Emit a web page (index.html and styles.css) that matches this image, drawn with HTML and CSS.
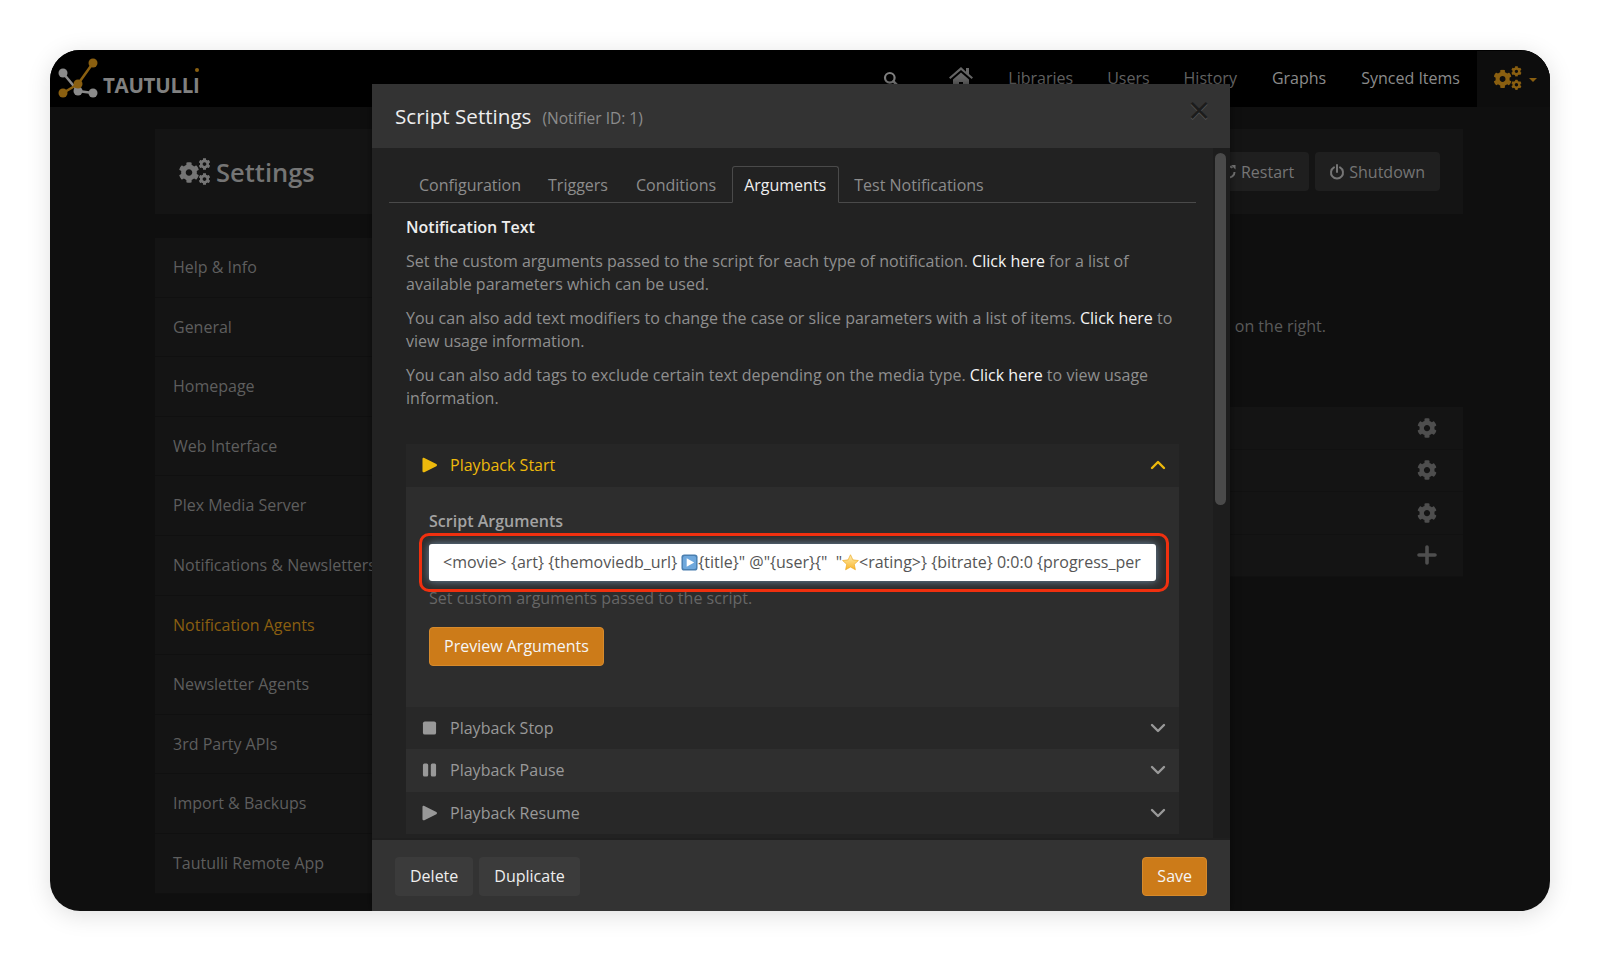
FILE: index.html
```html
<!DOCTYPE html>
<html lang="en">
<head>
	<meta charset="UTF-8">
	<title>Tautulli - Settings</title>
	<link rel="stylesheet" href="styles.css">
</head>
<body>
	<svg class="defs" width="0" height="0">
		<linearGradient id="star-fill" x1="0" y1="0" x2="0" y2="1">
			<stop offset="0" stop-color="#ffeeb0"/>
			<stop offset="1" stop-color="#f9b52b"/>
		</linearGradient>
		<symbol id="cog" viewBox="0 0 512 512">
			<path d="M487.4 315.7l-42.6-24.6c4.3-23.2 4.3-47 0-70.2l42.6-24.6c4.9-2.8 7.1-8.6 5.5-14-11.1-35.6-30-67.8-54.7-94.6-3.8-4.1-10-5.1-14.8-2.3L380.8 110c-17.9-15.4-38.5-27.3-60.8-35.1V25.8c0-5.6-3.9-10.5-9.4-11.7-36.7-8.2-74.3-7.8-109.2 0-5.5 1.2-9.4 6.1-9.4 11.7V75c-22.2 7.9-42.8 19.8-60.8 35.1L88.7 85.5c-4.9-2.8-11-1.9-14.8 2.3-24.7 26.7-43.6 58.9-54.7 94.6-1.7 5.4.6 11.2 5.5 14L67.3 221c-4.3 23.2-4.3 47 0 70.2l-42.6 24.6c-4.9 2.8-7.1 8.6-5.5 14 11.1 35.6 30 67.8 54.7 94.6 3.8 4.1 10 5.1 14.8 2.3l42.6-24.6c17.9 15.4 38.5 27.3 60.8 35.1v49.2c0 5.6 3.9 10.5 9.4 11.7 36.7 8.2 74.3 7.8 109.2 0 5.5-1.2 9.4-6.1 9.4-11.7v-49.2c22.2-7.9 42.8-19.8 60.8-35.1l42.6 24.6c4.9 2.8 11 1.9 14.8-2.3 24.7-26.7 43.6-58.9 54.7-94.6 1.5-5.5-.7-11.3-5.6-14.1zM256 336c-44.1 0-80-35.9-80-80s35.9-80 80-80 80 35.9 80 80-35.9 80-80 80z"/>
		</symbol>
		<symbol id="cogs" viewBox="0 0 32 28">
			<use href="#cog" x="0" y="4" width="21" height="21"/>
			<use href="#cog" x="20" y="0" width="12" height="12"/>
			<use href="#cog" x="20" y="15" width="12" height="12"/>
		</symbol>
		<symbol id="chev-down" viewBox="0 0 16 10">
			<path d="M2 2l6 6 6-6" fill="none" stroke="currentColor" stroke-width="2.4" stroke-linecap="round" stroke-linejoin="round"/>
		</symbol>
		<symbol id="play" viewBox="0 0 16 16">
			<path d="M.5 1.6C.5.4 1.5-.2 2.5.4l12.8 6.4c.9.5.9 1.9 0 2.4L2.5 15.6c-1 .6-2 0-2-1.2z"/>
		</symbol>
	</svg>

	<div class="window">
		<nav class="navbar">
			<a class="brand">
				<svg class="brand-mark" viewBox="0 0 44 44">
					<path d="M6 16L21 34L36 36" fill="none" stroke="#8a8a8a" stroke-width="2.5"/>
					<circle cx="6" cy="16" r="4.5" fill="#8a8a8a"/>
					<circle cx="21" cy="34" r="4.5" fill="#8a8a8a"/>
					<circle cx="36" cy="36" r="4.5" fill="#8a8a8a"/>
					<path d="M6 36L21 27L36 6" fill="none" stroke="#8a5f10" stroke-width="2.5"/>
					<circle cx="36" cy="6" r="4.5" fill="#8a5f10"/>
					<circle cx="21" cy="27" r="4.5" fill="#8a5f10"/>
					<circle cx="6" cy="36" r="4.5" fill="#8a5f10"/>
				</svg>
				<span class="brand-name">TAUTULL<span class="brand-i">I</span></span>
			</a>
			<div class="nav-links">
				<svg class="nav-search" viewBox="0 0 16 16"><circle cx="6.8" cy="6.8" r="4.8" fill="none" stroke="currentColor" stroke-width="2.2"/><path d="M10.4 10.4l4 4" stroke="currentColor" stroke-width="2.6" stroke-linecap="round"/></svg>
				<svg class="nav-home" viewBox="0 0 24 20"><path d="M12 0L0 10.5l1.4 1.6L12 2.9l10.6 9.2 1.4-1.6-4-3.5V1h-3v3.8z" fill="currentColor"/><path d="M4 12.5L12 5.6l8 6.9V20h-6v-5h-4v5H4z" fill="currentColor"/></svg>
				<a>Libraries</a>
				<a>Users</a>
				<a>History</a>
				<a>Graphs</a>
				<a>Synced Items</a>
				<div class="nav-settings">
					<svg class="nav-cogs"><use href="#cogs"/></svg>
					<span class="caret"></span>
				</div>
			</div>
		</nav>

		<main class="page">
			<header class="page-head">
				<h1><svg class="head-cogs"><use href="#cogs"/></svg>Settings</h1>
				<div class="head-btns">
					<a class="btn-dark"><svg class="btn-ico" viewBox="0 0 16 16"><path d="M13.5 8a5.5 5.5 0 1 1-2-4.2" fill="none" stroke="currentColor" stroke-width="2"/><path d="M10 1h4.5v4.5z" fill="currentColor"/></svg>Restart</a>
					<a class="btn-dark"><svg class="btn-ico" viewBox="0 0 16 16"><path d="M5 3.4a6 6 0 1 0 6 0" fill="none" stroke="currentColor" stroke-width="2" stroke-linecap="round"/><path d="M8 1v7" stroke="currentColor" stroke-width="2" stroke-linecap="round"/></svg>Shutdown</a>
				</div>
			</header>
			<div class="page-body">
				<ul class="side">
					<li>Help &amp; Info</li>
					<li>General</li>
					<li>Homepage</li>
					<li>Web Interface</li>
					<li>Plex Media Server</li>
					<li>Notifications &amp; Newsletters</li>
					<li class="on">Notification Agents</li>
					<li>Newsletter Agents</li>
					<li>3rd Party APIs</li>
					<li>Import &amp; Backups</li>
					<li>Tautulli Remote App</li>
				</ul>
				<section class="agents">
					<p class="agents-note">Add a new notification agent, or configure an existing notification agent by clicking the settings icon on the right.</p>
					<ul class="agent-list">
						<li><svg class="agent-ico"><use href="#cog"/></svg></li>
						<li><svg class="agent-ico"><use href="#cog"/></svg></li>
						<li><svg class="agent-ico"><use href="#cog"/></svg></li>
						<li><svg class="agent-ico" viewBox="0 0 20 20"><path d="M10 2v16M2 10h16" stroke="currentColor" stroke-width="3.6" stroke-linecap="round"/></svg></li>
					</ul>
				</section>
			</div>
		</main>

		<div class="modal">
			<div class="modal-head">
				<h2>Script Settings</h2>
				<small>(Notifier ID: 1)</small>
				<span class="modal-x">&times;</span>
			</div>
			<div class="modal-body">
				<ul class="tabs">
					<li>Configuration</li>
					<li>Triggers</li>
					<li>Conditions</li>
					<li class="on">Arguments</li>
					<li>Test Notifications</li>
				</ul>
				<div class="pane">
					<h3>Notification Text</h3>
					<p>Set the custom arguments passed to the script for each type of notification. <a>Click here</a> for a list of available parameters which can be used.</p>
					<p>You can also add text modifiers to change the case or slice parameters with a list of items. <a>Click here</a> to view usage information.</p>
					<p>You can also add tags to exclude certain text depending on the media type. <a>Click here</a> to view usage information.</p>

					<div class="acc">
						<div class="acc-row open">
							<svg class="acc-ico"><use href="#play"/></svg>
							<span>Playback Start</span>
							<svg class="acc-chev up"><use href="#chev-down"/></svg>
						</div>
						<div class="acc-body">
							<label>Script Arguments</label>
							<div class="field">
								<div class="input">&lt;movie&gt; {art} {themoviedb_url} <svg class="emoji" viewBox="0 0 18 18"><rect x="0.5" y="0.5" width="17" height="17" rx="3" fill="#4a7fb0"/><rect x="2" y="2" width="14" height="14" rx="2" fill="#6fa8dc"/><path d="M6 4.5l8 4.5-8 4.5z" fill="#fff"/></svg>{title}" @"{user}{"&nbsp; "<svg class="emoji" viewBox="0 0 18 18"><path d="M9 .8l2.5 5.4 5.9.7-4.4 4 1.2 5.8L9 13.8l-5.2 2.9L5 10.9.6 6.9l5.9-.7z" fill="url(#star-fill)" stroke="#eda820" stroke-width=".7" stroke-linejoin="round"/></svg>&lt;rating&gt;} {bitrate} 0:0:0 {progress_per</div>
							</div>
							<p class="help">Set custom arguments passed to the script.</p>
							<a class="btn-orange">Preview Arguments</a>
						</div>
						<div class="acc-row">
							<svg class="acc-ico" viewBox="0 0 16 16"><rect x="1" y="1" width="14" height="14" rx="2"/></svg>
							<span>Playback Stop</span>
							<svg class="acc-chev"><use href="#chev-down"/></svg>
						</div>
						<div class="acc-row alt">
							<svg class="acc-ico" viewBox="0 0 16 16"><rect x="1" y="1" width="5.6" height="14" rx="1.6"/><rect x="9.4" y="1" width="5.6" height="14" rx="1.6"/></svg>
							<span>Playback Pause</span>
							<svg class="acc-chev"><use href="#chev-down"/></svg>
						</div>
						<div class="acc-row">
							<svg class="acc-ico"><use href="#play"/></svg>
							<span>Playback Resume</span>
							<svg class="acc-chev"><use href="#chev-down"/></svg>
						</div>
					</div>
				</div>
				<div class="scroll"><div class="thumb"></div></div>
			</div>
			<div class="modal-foot">
				<a class="btn-grey">Delete</a>
				<a class="btn-grey">Duplicate</a>
				<a class="btn-orange save">Save</a>
			</div>
		</div>
	</div>
</body>
</html>
```

FILE: styles.css
```css
*{margin: 0;padding: 0;box-sizing: border-box;}
body{background: #fff;font-family: "Open Sans", "Liberation Sans", sans-serif;font-size: 16px;}
li{list-style: none;}
.defs{position: absolute;}

.window{
	position: relative;
	width: 1500px;
	height: 861px;
	margin: 50px;
	border-radius: 30px;
	background: #0f0f0f;
	overflow: hidden;
}
body::before{
	content: "";
	position: absolute;
	top: 50px;left: 50px;
	width: 1500px;height: 861px;
	border-radius: 30px;
	box-shadow: 0 4px 24px rgba(0,0,0,.13);
}

/* top bar */
.navbar{display: flex;justify-content: space-between;height: 57px;background: #000;position: relative;}
.brand{display: flex;align-items: center;padding-left: 7px;}
.brand-mark{width: 44px;height: 44px;margin-top: 1px;}
.brand-name{font-size: 20.5px;font-weight: 700;color: #808080;margin: 14px 0 0 2px;letter-spacing: -.3px;line-height: 1;}
.brand-i{position: relative;}
.brand-i::before{
	content: "";
	position: absolute;
	top: -3px;left: 2px;
	width: 4px;height: 4px;
	border-radius: 50%;
	background: #8a5f10;
}
.nav-links{display: flex;align-items: center;color: #666;}
.nav-links a{margin-right: 34px;margin-bottom: 1px;}
.nav-links a:nth-of-type(3),.nav-links a:nth-of-type(4){margin-right: 35px;}
.nav-links a:nth-of-type(n+4){color: #8b8b8b;}
.nav-search{width: 16px;height: 16px;margin-right: 50px;color: #808080;}
.nav-home{width: 24px;height: 20px;margin-right: 35px;color: #666;margin-top: -4px;}
.nav-links a:last-of-type{margin-right: 17px;}
.nav-settings{display: flex;align-items: center;width: 73px;height: 56px;padding-left: 16px;background: #0d0d0d;}
.nav-cogs{width: 29px;height: 25px;fill: #8a5f10;}
.caret{margin-left: 7px;margin-top: 3px;border: 4px solid transparent;border-top-color: #8a5f10;border-bottom: 0;}

/* page behind the modal */
.page{padding: 22px 87px 0 105px;}
.page-head{display: flex;justify-content: space-between;align-items: center;height: 85px;padding: 0 23px;background: #141414;}
.page-head h1{display: flex;align-items: center;font-size: 25.5px;font-weight: 600;color: #757575;}
.head-cogs{width: 33px;height: 28px;fill: #757575;margin-right: 5px;}
.head-btns{display: flex;gap: 6px;}
.btn-dark{display: flex;align-items: center;height: 39px;padding: 0 15px 0 14px;border-radius: 4px;background: #1f1f1f;color: #757575;}
.btn-ico{width: 16px;height: 16px;margin-right: 4px;}
.page-body{display: flex;gap: 0;margin-top: 24px;}
.side{width: 300px;flex: none;}
.side li{height: 59.6px;line-height: 59px;padding-left: 18px;background: #141414;border-bottom: 1px solid #101010;color: #5e5e5e;white-space: nowrap;}
.side li.on{color: #8a5f10;}
.agents{flex: 1;min-width: 0;}
.agents-note{height: 169px;padding-top: 77px;padding-right: 137px;text-align: right;white-space: nowrap;color: #5a5a5a;}
.agent-list{margin-top: 0;}
.agent-list li{display: flex;align-items: center;justify-content: flex-end;height: 42.5px;padding-right: 26px;background: #141414;border-bottom: 1px solid #111;}
.agent-ico{width: 20px;height: 20px;color: #4e4e4e;fill: #4e4e4e;}

/* the modal */
.modal{
	position: absolute;
	top: 34px;left: 322px;
	display: flex;
	flex-direction: column;
	width: 858px;
	height: 827px;
	background: #222;
	box-shadow: 0 0 8px rgba(0,0,0,.5);
}
.modal-head{display: flex;align-items: baseline;height: 64px;padding: 15px 20px 0 23px;background: #333;}
.modal-head h2{font-size: 20.6px;font-weight: 400;line-height: 30px;color: #eee;}
.modal-head small{margin-left: 11px;font-size: 15.5px;color: #8c8c8c;}
.modal-x{margin-left: auto;font-size: 38px;line-height: 20px;color: #1c1c1c;text-shadow: 0 1px 0 #555;}
.modal-body{position: relative;flex: 1;min-height: 0;overflow: hidden;padding: 18px 34px 0 17px;}
.tabs{display: flex;height: 37px;padding-left: 18px;border-bottom: 1px solid #4a4a4a;}
.tabs li{height: 37px;line-height: 39px;padding: 0 12px;margin-right: 4px;color: #8c8c8c;}
.tabs li:first-child{margin-right: 3px;}
.tabs li.on{background: #222;border: 1px solid #4a4a4a;border-bottom-color: #222;border-radius: 3px 3px 0 0;color: #eee;padding: 0 12px 0 11px;margin-right: 3px;line-height: 37px;}
.pane{padding: 12px 17px 0;letter-spacing: .015px;}
.pane h3{font-size: 16px;font-weight: 600;line-height: 24px;color: #eee;margin-bottom: 11px;letter-spacing: 0;}
.pane > p{line-height: 23px;color: #8f8f8f;margin-bottom: 11px;}
.pane > p a{color: #f5f5f5;}
.acc{margin-top: 34px;}
.acc-row{display: flex;align-items: center;height: 42.5px;padding: 0 13px 0 16px;background: #282828;color: #999;}
.acc-row.alt{background: #2f2f2f;}
.acc-row span{margin-left: 13px;}
.acc-row.open{background: #262626;color: #edb90c;}
.acc-ico{width: 15px;height: 16px;fill: currentColor;}
.acc-chev{width: 16px;height: 10px;margin-left: auto;color: #999;}
.acc-row.open .acc-chev{color: #edb90c;}
.acc-chev.up{transform: rotate(180deg);}
.acc-body{height: 220px;padding: 22px 23px 0;background: #2d2d2d;}
.acc-body label{display: block;font-weight: 600;line-height: 24px;color: #a3a3a3;}
.field{position: relative;margin-top: 11px;}
.field::after{
	content: "";
	position: absolute;
	top: -11px;left: -10px;right: -13px;bottom: -11px;
	border: 3px solid #f0300f;
	border-radius: 10px;
}
.input{
	height: 37px;
	line-height: 36px;
	padding: 0 14px;
	border-radius: 3px;
	background: #fff;
	color: #555;
	white-space: nowrap;
	overflow: hidden;
	letter-spacing: 0;
	box-shadow: 0 0 8px rgba(140,180,215,.7);
}
.input .emoji{width: 17px;height: 17px;vertical-align: -3px;}
.help{margin-top: 5px;line-height: 24px;color: #666;}
.btn-orange{display: inline-block;height: 39px;line-height: 37px;padding: 0 14px;border: 1px solid #d68a2c;border-radius: 4px;background: #cc7b19;color: #f5f5f5;letter-spacing: 0;}
.acc-body .btn-orange{margin-top: 17px;}
.scroll{position: absolute;top: 0;right: 0;bottom: 0;width: 17px;background: #1d1d1d;}
.thumb{width: 11px;height: 352px;margin: 5px 0 0 2px;border-radius: 6px;background: #4a4a4a;}
.modal-foot{display: flex;align-items: center;gap: 6px;height: 73px;padding: 1px 23px 0;background: #333;border-top: 2px solid #1f1f1f;}
.btn-grey{height: 39px;line-height: 39px;padding: 0 15px;border-radius: 4px;background: #3b3b3b;color: #eee;}
.save{margin-left: auto;}
```
